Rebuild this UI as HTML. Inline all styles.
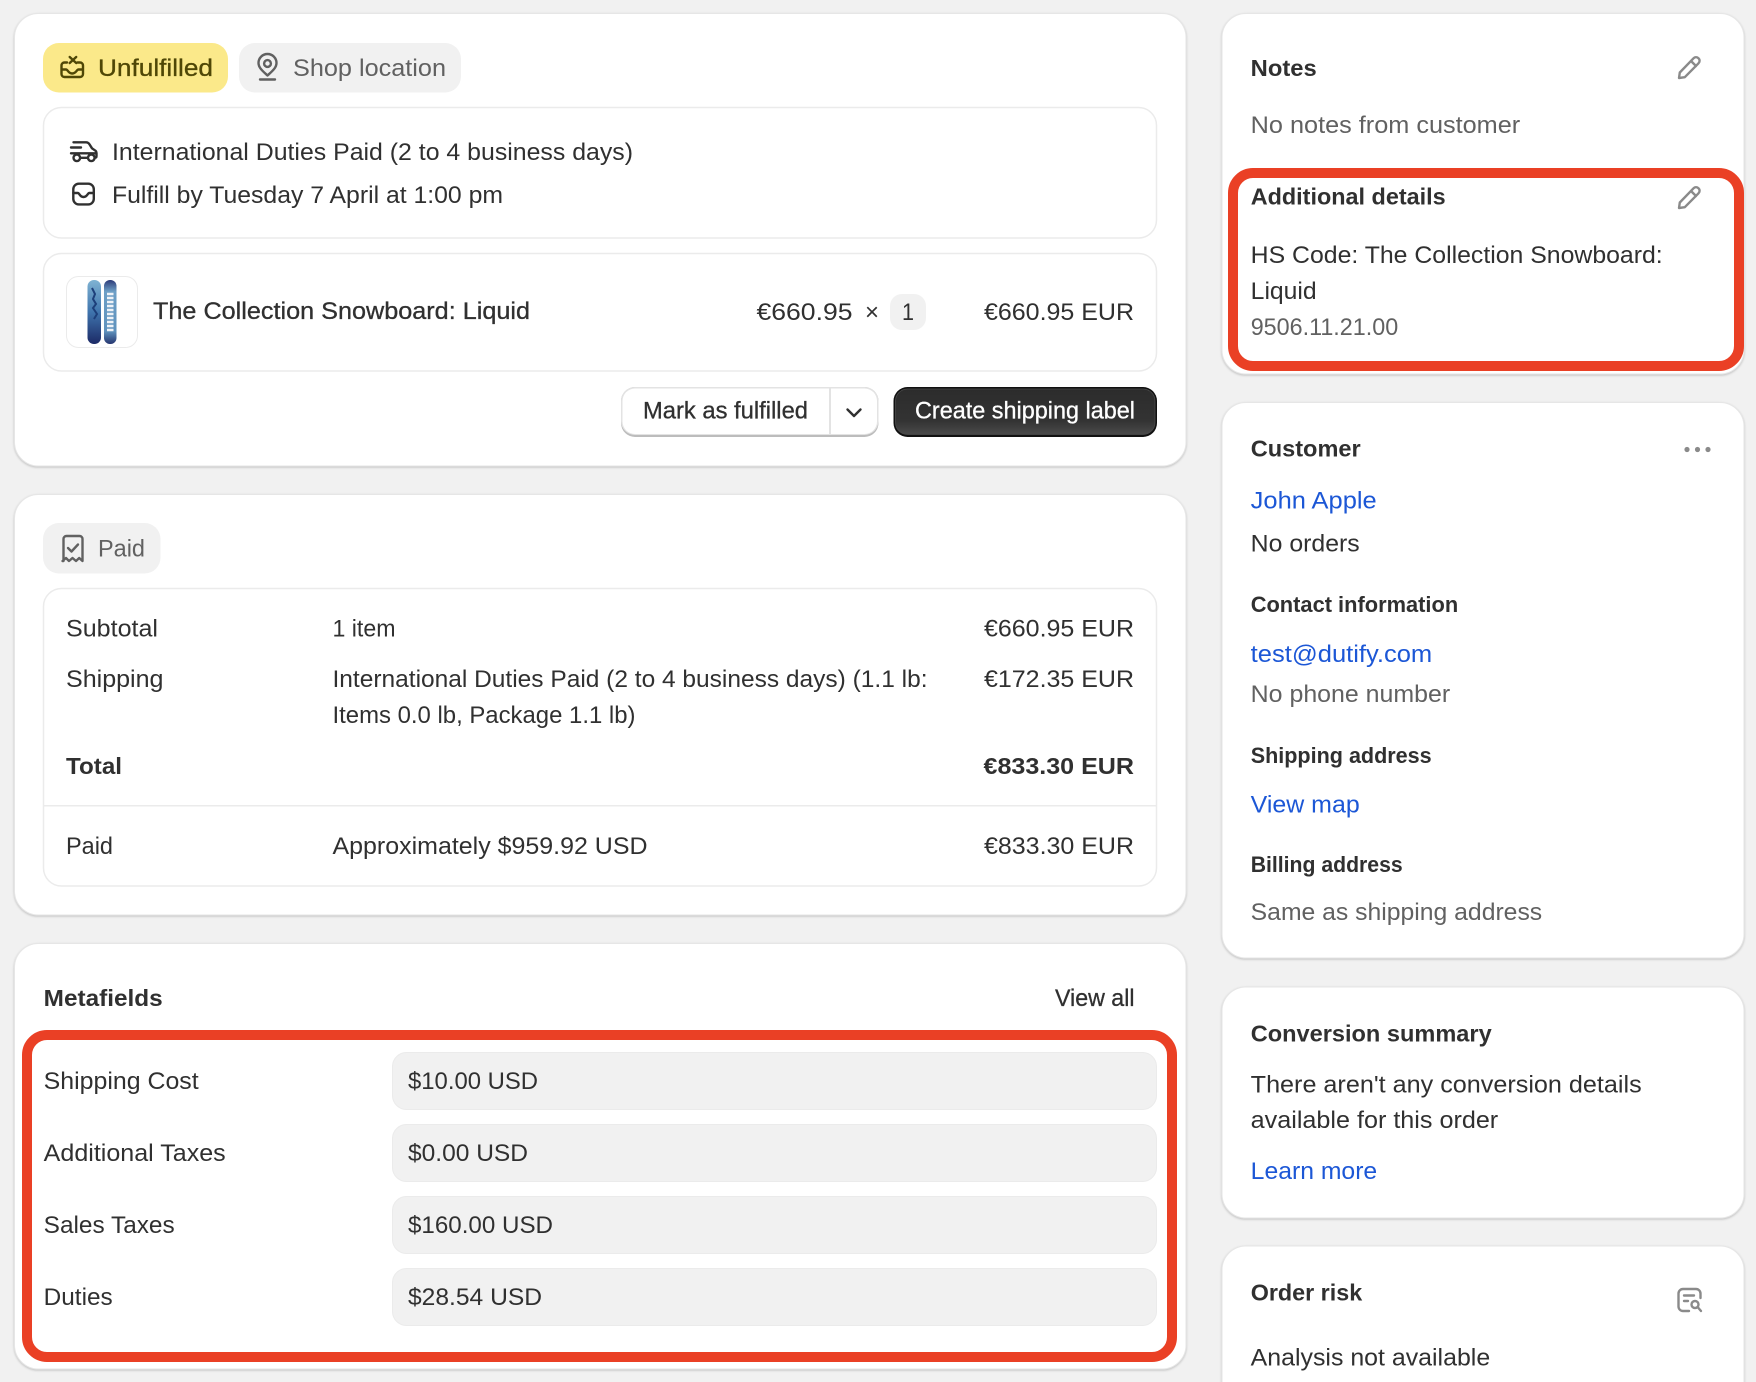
<!DOCTYPE html>
<html lang="en"><head><meta charset="utf-8"><title>Order</title>
<style>
html,body{margin:0;padding:0;background:#f1f1f1;width:1756px;height:1382px;overflow:hidden}
svg{display:block}
text{font-family:"Liberation Sans",sans-serif;font-size:24px;fill:#303030}
.m{fill:#616161}
.l{fill:#1c57d6}
.b{font-weight:700;font-size:23.5px}
.s{font-weight:700;font-size:22px}
.md{stroke:#303030;stroke-width:.3px}
.card{fill:#fff;stroke:#e6e6e6;stroke-width:1;filter:drop-shadow(0 1.5px 1px rgba(0,0,0,.2))}
.box{fill:#fff;stroke:#ebebeb;stroke-width:1.5}
.f{fill:#f1f1f1;stroke:#ebebeb;stroke-width:1}
.ic{fill:none;stroke-width:2.4;stroke-linecap:round;stroke-linejoin:round}
</style></head><body>
<svg width="1756" height="1382" viewBox="0 0 1756 1382" xmlns="http://www.w3.org/2000/svg">
<defs>
<linearGradient id="bd" x1="0" y1="0" x2="0" y2="1"><stop offset="0" stop-color="#2c2c2c"/><stop offset=".7" stop-color="#333"/><stop offset="1" stop-color="#4a4a4a"/></linearGradient>
<linearGradient id="b1" x1="0" y1="0" x2="0" y2="1"><stop offset="0" stop-color="#7fb3d3"/><stop offset=".5" stop-color="#3f74ad"/><stop offset="1" stop-color="#1c2a66"/></linearGradient>
<linearGradient id="b2" x1="0" y1="0" x2="0" y2="1"><stop offset="0" stop-color="#2c3a78"/><stop offset=".18" stop-color="#6d9fc6"/><stop offset=".8" stop-color="#5f92bd"/><stop offset="1" stop-color="#25356f"/></linearGradient>
</defs>

<!-- Cards -->
<rect class="card" x="14.5" y="13.5" width="1171.5" height="452.5" rx="24"/>
<rect class="card" x="14.5" y="494.5" width="1171.5" height="420.5" rx="24"/>
<rect class="card" x="14.5" y="943.5" width="1171.5" height="425.5" rx="24"/>
<rect class="card" x="1222" y="13.5" width="522" height="360.5" rx="24"/>
<rect class="card" x="1222" y="402.5" width="522" height="555.5" rx="24"/>
<rect class="card" x="1222" y="987" width="522" height="231" rx="24"/>
<rect class="card" x="1222" y="1246" width="522" height="170" rx="24"/>

<!-- Pills -->
<rect x="43" y="43" width="185" height="49.5" rx="16" fill="#fbe98a"/>
<path class="ic" stroke="#4f4706" d="M67 62.500h-2.500a3 3 0 0 0-3 3v8.500a3 3 0 0 0 3 3h15.500a3 3 0 0 0 3-3v-8.500a3 3 0 0 0-3-3H77.500M61.500 69.500h4.500c2 0 2 4 6.200 4s4.300-4 6.300-4h4.500M69.700 57l6.500 6M76.200 57l-6.500 6"/>
<text x="98" y="75.800" textLength="115" lengthAdjust="spacingAndGlyphs" style="fill:#4f4706;stroke:#4f4706;stroke-width:.3px">Unfulfilled</text>
<rect x="239" y="43" width="222" height="49.5" rx="16" fill="#f1f1f1"/>
<path class="ic" stroke="#616161" d="M267.500 75.500c-4-3.800-9-7.500-9-12.500a9 9 0 0 1 18 0c0 5-5 8.700-9 12.500zM260 79.500h15"/>
<circle class="ic" stroke="#616161" cx="267.500" cy="63.500" r="3.400"/>
<text class="m" x="293" y="76" textLength="153" lengthAdjust="spacingAndGlyphs">Shop location</text>

<!-- Delivery box -->
<rect class="box" x="43.500" y="107.500" width="1113" height="130.500" rx="18"/>
<path class="ic" stroke="#303030" d="M73.500 142.300h12.500c1.800 0 2.800.8 3.600 2.200l2.400 3.800 3.600 2.500c.7.600.9 1.200.9 2.200v3c0 1-.5 1.700-1.500 1.700M71 147.500h10M71 153.300h25.500M80.500 157.800h7.300"/>
<circle class="ic" stroke="#303030" cx="76.800" cy="157.800" r="3.300"/>
<circle class="ic" stroke="#303030" cx="91.300" cy="157.800" r="3.300"/>
<text x="112" y="160" textLength="521" lengthAdjust="spacingAndGlyphs">International Duties Paid (2 to 4 business days)</text>
<rect class="ic" stroke="#303030" x="73.300" y="183.700" width="20.500" height="20.700" rx="5.500"/>
<path class="ic" stroke="#303030" d="M73.300 193h4.500c1.800 0 1.800 4 5.700 4s4-4 5.800-4h4.500"/>
<text x="112" y="203" textLength="391" lengthAdjust="spacingAndGlyphs">Fulfill by Tuesday 7 April at 1:00 pm</text>

<!-- Product box -->
<rect class="box" x="43.500" y="253.500" width="1113" height="117.500" rx="18"/>
<rect x="66.500" y="276.500" width="71" height="71" rx="12" fill="#fff" stroke="#ebebeb" stroke-width="1"/>
<rect x="87.500" y="280" width="13.500" height="64" rx="6.500" fill="url(#b1)"/>
<path d="M92 288l3 6-2 5 3 5-3 4 4 6-3 5" stroke="#1d3f7a" stroke-width="2" fill="none"/>
<rect x="104" y="280" width="12.500" height="64" rx="6" fill="url(#b2)"/>
<path d="M107 294h6.500M107 298h6.500M107 302h6.500M107 306h6.500M107 310h6.500M107 314h6.500M107 318h6.500M107 322h6.500M107 326h6.500M107 330h6.500" stroke="#eef2f7" stroke-width="2.400"/>
<text x="153" y="319" textLength="377" lengthAdjust="spacingAndGlyphs" class="md">The Collection Snowboard: Liquid</text>
<text x="756.500" y="320" textLength="96" lengthAdjust="spacingAndGlyphs">€660.95</text>
<text x="865" y="320" textLength="14" lengthAdjust="spacingAndGlyphs">×</text>
<rect x="890" y="294" width="36" height="36" rx="12" fill="#f1f1f1"/>
<text x="902" y="320" textLength="12" lengthAdjust="spacingAndGlyphs">1</text>
<text x="984" y="320" textLength="150" lengthAdjust="spacingAndGlyphs">€660.95 EUR</text>

<!-- Buttons -->
<rect x="621" y="387" width="257.500" height="50" rx="14" fill="#bcbcbc"/>
<rect x="621" y="387" width="257.500" height="48" rx="14" fill="#e3e3e3"/>
<rect x="622.500" y="388.500" width="254.500" height="45.500" rx="12.500" fill="#fff"/>
<rect x="829" y="388" width="2" height="46" fill="#e3e3e3"/>
<text x="643" y="418.500" textLength="165" lengthAdjust="spacingAndGlyphs" class="md">Mark as fulfilled</text>
<path class="ic" stroke="#303030" d="M847.500 409.500l6.500 6.500 6.500-6.500"/>
<rect x="893.500" y="387" width="263.500" height="50" rx="14" fill="#111"/>
<rect x="895.500" y="389" width="259.500" height="45.500" rx="12" fill="url(#bd)" stroke="#4a4a4a" stroke-width=".8"/>
<text x="915" y="418.500" textLength="220" lengthAdjust="spacingAndGlyphs" style="fill:#fff;stroke:#fff;stroke-width:.3px">Create shipping label</text>

<!-- Paid -->
<rect x="43" y="523" width="117.500" height="50.500" rx="16" fill="#f1f1f1"/>
<path class="ic" stroke="#616161" d="M63.500 561v-22a3 3 0 0 1 3-3h13a3 3 0 0 1 3 3v22l-3.300-3-3.200 3-3.500-3-3.500 3-3-3-3.500 3z"/>
<path class="ic" stroke="#616161" d="M68 548l3.500 3.500 6.500-7"/>
<text class="m" x="98" y="556.500" textLength="47" lengthAdjust="spacingAndGlyphs">Paid</text>

<rect class="box" x="43.500" y="588.500" width="1113" height="297.500" rx="18"/>
<rect x="44" y="805" width="1112" height="1.500" fill="#ebebeb"/>
<text x="66" y="636.500" textLength="92" lengthAdjust="spacingAndGlyphs">Subtotal</text>
<text x="332.500" y="636.500" textLength="63" lengthAdjust="spacingAndGlyphs">1 item</text>
<text x="984" y="636.500" textLength="150" lengthAdjust="spacingAndGlyphs">€660.95 EUR</text>
<text x="66" y="687" textLength="97.500" lengthAdjust="spacingAndGlyphs">Shipping</text>
<text x="332.500" y="687" textLength="595" lengthAdjust="spacingAndGlyphs">International Duties Paid (2 to 4 business days) (1.1 lb:</text>
<text x="332.500" y="723" textLength="303" lengthAdjust="spacingAndGlyphs">Items 0.0 lb, Package 1.1 lb)</text>
<text x="984" y="687" textLength="150" lengthAdjust="spacingAndGlyphs">€172.35 EUR</text>
<text class="b" x="66" y="774" textLength="56" lengthAdjust="spacingAndGlyphs">Total</text>
<text class="b" x="983.500" y="774" textLength="150.500" lengthAdjust="spacingAndGlyphs">€833.30 EUR</text>
<text x="66" y="854" textLength="47" lengthAdjust="spacingAndGlyphs">Paid</text>
<text x="332.500" y="854" textLength="315" lengthAdjust="spacingAndGlyphs">Approximately $959.92 USD</text>
<text x="984" y="854" textLength="150" lengthAdjust="spacingAndGlyphs">€833.30 EUR</text>

<!-- Metafields -->
<text class="b" x="43.700" y="1006" textLength="119" lengthAdjust="spacingAndGlyphs">Metafields</text>
<text class="md" x="1055" y="1006" textLength="79.500" lengthAdjust="spacingAndGlyphs">View all</text>
<rect x="27" y="1035" width="1145" height="322" rx="20" fill="none" stroke="#ea4025" stroke-width="10"/>

<text x="43.700" y="1089" textLength="155" lengthAdjust="spacingAndGlyphs">Shipping Cost</text>
<rect class="f" x="392.500" y="1052.500" width="764" height="57" rx="14"/>
<text x="408" y="1089" textLength="130" lengthAdjust="spacingAndGlyphs">$10.00 USD</text>
<text x="43.700" y="1161" textLength="182" lengthAdjust="spacingAndGlyphs">Additional Taxes</text>
<rect class="f" x="392.500" y="1124.500" width="764" height="57" rx="14"/>
<text x="408" y="1161" textLength="120" lengthAdjust="spacingAndGlyphs">$0.00 USD</text>
<text x="43.700" y="1233" textLength="131" lengthAdjust="spacingAndGlyphs">Sales Taxes</text>
<rect class="f" x="392.500" y="1196.500" width="764" height="57" rx="14"/>
<text x="408" y="1233" textLength="145" lengthAdjust="spacingAndGlyphs">$160.00 USD</text>
<text x="43.700" y="1305" textLength="69" lengthAdjust="spacingAndGlyphs">Duties</text>
<rect class="f" x="392.500" y="1268.500" width="764" height="57" rx="14"/>
<text x="408" y="1305" textLength="134" lengthAdjust="spacingAndGlyphs">$28.54 USD</text>

<!-- Notes -->
<text class="b" x="1250.700" y="76" textLength="66" lengthAdjust="spacingAndGlyphs">Notes</text>
<path class="ic" stroke="#8a8a8a" d="M1679 78l.8-5.500L1693.500 58.300a3.400 3.400 0 0 1 5 0 3.400 3.400 0 0 1 0 5L1684.800 77.200zM1691 61l5 5"/>
<path class="ic" stroke="#8a8a8a" d="M1679 208l.8-5.500L1693.500 188.300a3.400 3.400 0 0 1 5 0 3.400 3.400 0 0 1 0 5L1684.800 207.200zM1691 191l5 5"/>
<text class="m" x="1250.700" y="133" textLength="269.500" lengthAdjust="spacingAndGlyphs">No notes from customer</text>
<text class="b" x="1250.700" y="204.500" textLength="195" lengthAdjust="spacingAndGlyphs">Additional details</text>
<text x="1250.700" y="262.800" textLength="412" lengthAdjust="spacingAndGlyphs">HS Code: The Collection Snowboard:</text>
<text x="1250.700" y="299" textLength="66" lengthAdjust="spacingAndGlyphs">Liquid</text>
<text class="m" x="1250.700" y="335" textLength="147.500" lengthAdjust="spacingAndGlyphs">9506.11.21.00</text>
<rect x="1233" y="173" width="506" height="193" rx="20" fill="none" stroke="#ea4025" stroke-width="10"/>

<!-- Customer -->
<text class="b" x="1250.700" y="456.500" textLength="110" lengthAdjust="spacingAndGlyphs">Customer</text>
<g fill="#8a8a8a"><circle cx="1687" cy="449.500" r="2.600"/><circle cx="1697.500" cy="449.500" r="2.600"/><circle cx="1708" cy="449.500" r="2.600"/></g>
<text class="l" x="1250.700" y="508.500" textLength="126" lengthAdjust="spacingAndGlyphs">John Apple</text>
<text x="1250.700" y="551.500" textLength="109" lengthAdjust="spacingAndGlyphs">No orders</text>
<text class="s" x="1250.700" y="612" textLength="207.500" lengthAdjust="spacingAndGlyphs">Contact information</text>
<text class="l" x="1250.700" y="662" textLength="181.500" lengthAdjust="spacingAndGlyphs">test@dutify.com</text>
<text class="m" x="1250.700" y="702" textLength="199.500" lengthAdjust="spacingAndGlyphs">No phone number</text>
<text class="s" x="1250.700" y="763" textLength="181" lengthAdjust="spacingAndGlyphs">Shipping address</text>
<text class="l" x="1250.700" y="812.500" textLength="109" lengthAdjust="spacingAndGlyphs">View map</text>
<text class="s" x="1250.700" y="872" textLength="152" lengthAdjust="spacingAndGlyphs">Billing address</text>
<text class="m" x="1250.700" y="920" textLength="291.500" lengthAdjust="spacingAndGlyphs">Same as shipping address</text>

<!-- Conversion -->
<text class="b" x="1250.700" y="1041.500" textLength="241" lengthAdjust="spacingAndGlyphs">Conversion summary</text>
<text x="1250.700" y="1092.500" textLength="391" lengthAdjust="spacingAndGlyphs">There aren't any conversion details</text>
<text x="1250.700" y="1128" textLength="247.500" lengthAdjust="spacingAndGlyphs">available for this order</text>
<text class="l" x="1250.700" y="1179" textLength="126.500" lengthAdjust="spacingAndGlyphs">Learn more</text>

<!-- Order risk -->
<text class="b" x="1250.700" y="1300.500" textLength="111.500" lengthAdjust="spacingAndGlyphs">Order risk</text>
<path class="ic" stroke="#8a8a8a" d="M1700.500 1298v-4.500a4.500 4.500 0 0 0-4.500-4.500h-13a4.500 4.500 0 0 0-4.500 4.500v13a4.500 4.500 0 0 0 4.500 4.500h6M1684 1295.500h10M1684 1301h4"/>
<circle class="ic" stroke="#8a8a8a" cx="1695" cy="1304.500" r="3.500"/>
<path class="ic" stroke="#8a8a8a" d="M1698 1307.500l3 3.500"/>
<text x="1250.700" y="1365.700" textLength="239.500" lengthAdjust="spacingAndGlyphs">Analysis not available</text>
</svg>
</body></html>
